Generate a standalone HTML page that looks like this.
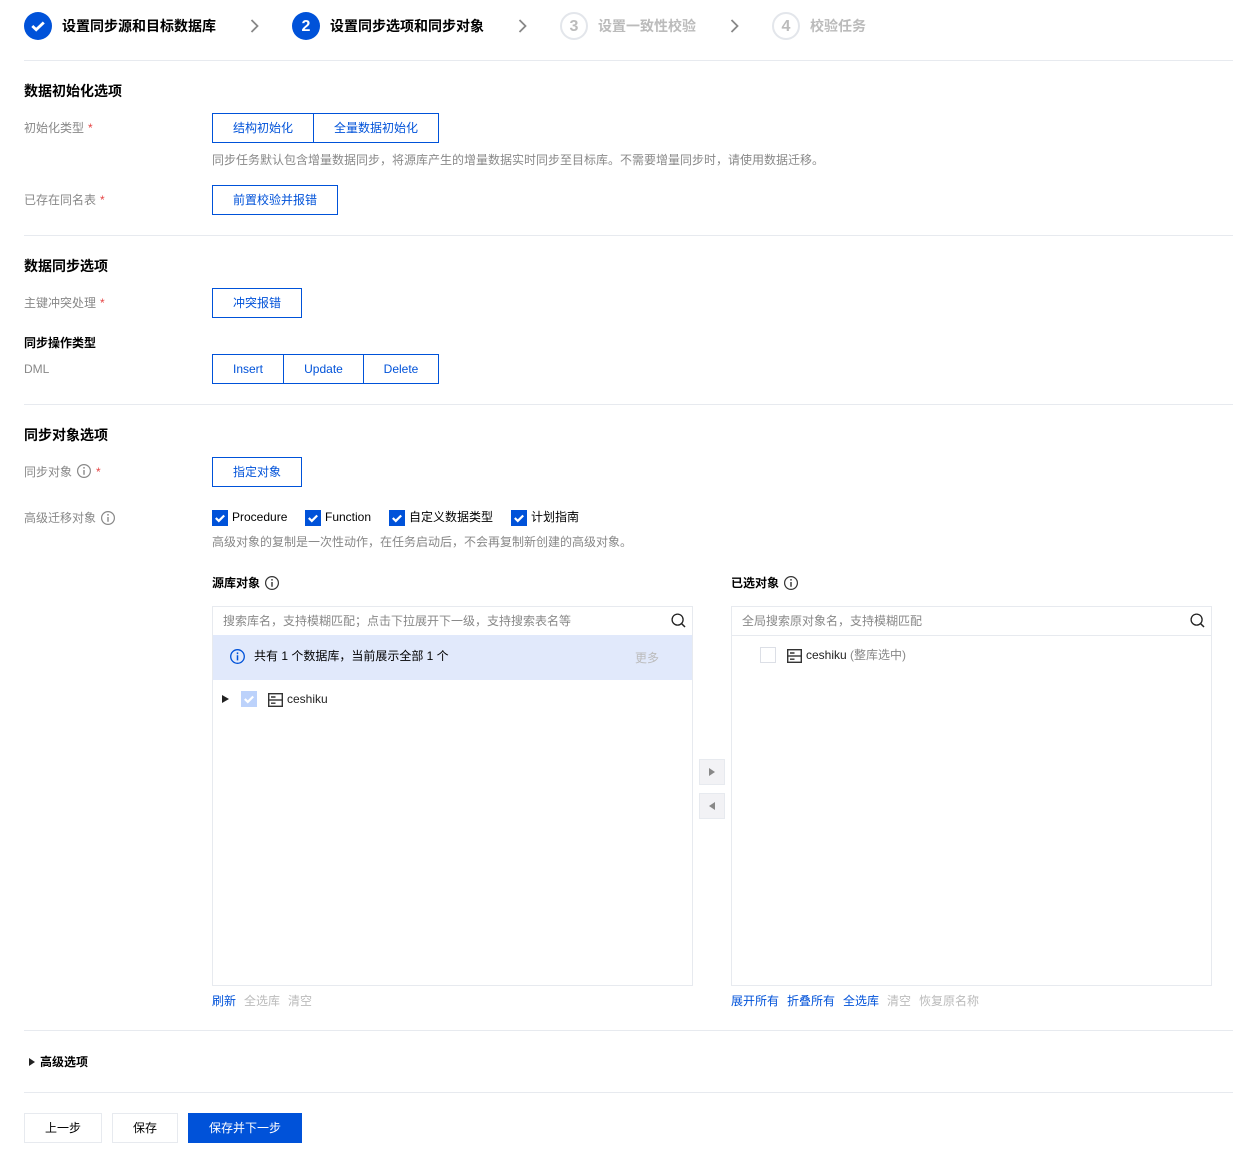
<!DOCTYPE html>
<html lang="zh">
<head>
<meta charset="utf-8">
<title>设置同步选项和同步对象</title>
<style>
html,body{margin:0;padding:0;background:#fff}
body{width:1233px;height:1155px;position:relative;overflow:hidden;font-family:"Liberation Sans","Noto Sans CJK SC",sans-serif;font-size:12px;color:#000}
.t{position:absolute;white-space:nowrap;line-height:20px;height:20px}
.g{color:#888}.d{color:#000}.l{color:#bbb}.b{color:#0052d9}
.h{font-weight:700;color:#000}
.s{font-size:14px;font-weight:700;color:#000}
.sg{font-size:14px;font-weight:700;color:#bbb}
.line{position:absolute;left:24px;width:1209px;height:1px;background:#e7eaef}
.btn{position:absolute;box-sizing:border-box;height:30px;border:1px solid #0052d9;color:#0052d9;background:#fff;text-align:center;line-height:28px;white-space:nowrap}
.r{color:#e54545;margin-left:4px;font-size:12px}
.circ{position:absolute;box-sizing:border-box;width:28px;height:28px;border-radius:50%;top:12px;text-align:center;font-size:16px;font-weight:700;line-height:26px}
.on{background:#0052d9;color:#fff;line-height:29px}
.off{border:2px solid #e3e6eb;color:#bbb;line-height:25px}
.cb{position:absolute;width:16px;height:16px;background:#0052d9}
.panel{position:absolute;box-sizing:border-box;top:606px;width:481px;height:380px;border:1px solid #e7eaef;background:#fff}
.sep{position:absolute;left:0;right:0;top:28px;height:1px;background:#e7eaef}
.mv{position:absolute;box-sizing:border-box;left:699px;width:26px;height:26px;background:#f2f2f5;border:1px solid #e7eaef}
svg{position:absolute;display:block;overflow:visible}
.fb{position:absolute;box-sizing:border-box;top:1113px;height:30px;border:1px solid #e7eaef;text-align:center;line-height:28px;color:#000;background:#fff}
</style>
</head>
<body>

<!-- Steps -->
<div class="circ on" style="left:24px"></div>
<svg style="left:24px;top:12px" width="28" height="28" viewBox="0 0 28 28"><path d="M8.3 14l3.9 3.7 7.6-7.2" fill="none" stroke="#fff" stroke-width="2.8"/></svg>
<div class="t s" style="left:62px;top:16px">设置同步源和目标数据库</div>
<svg style="left:250px;top:19px" width="10" height="14" viewBox="0 0 10 14"><path d="M1.5 1l6 6-6 6" fill="none" stroke="#888" stroke-width="1.8"/></svg>
<div class="circ on" style="left:292px">2</div>
<div class="t s" style="left:330px;top:16px">设置同步选项和同步对象</div>
<svg style="left:518px;top:19px" width="10" height="14" viewBox="0 0 10 14"><path d="M1.5 1l6 6-6 6" fill="none" stroke="#888" stroke-width="1.8"/></svg>
<div class="circ off" style="left:560px">3</div>
<div class="t sg" style="left:598px;top:16px">设置一致性校验</div>
<svg style="left:730px;top:19px" width="10" height="14" viewBox="0 0 10 14"><path d="M1.5 1l6 6-6 6" fill="none" stroke="#888" stroke-width="1.8"/></svg>
<div class="circ off" style="left:772px">4</div>
<div class="t sg" style="left:810px;top:16px">校验任务</div>
<div class="line" style="top:60px"></div>

<!-- Section 1 -->
<div class="t h" style="left:24px;top:81px;font-size:14px">数据初始化选项</div>
<div class="t g" style="left:24px;top:118px">初始化类型<span class="r">*</span></div>
<div class="btn" style="left:212px;top:113px;width:102px">结构初始化</div>
<div class="btn" style="left:313px;top:113px;width:126px">全量数据初始化</div>
<div class="t g" style="left:212px;top:150px">同步任务默认包含增量数据同步，将源库产生的增量数据实时同步至目标库。不需要增量同步时，请使用数据迁移。</div>
<div class="t g" style="left:24px;top:190px">已存在同名表<span class="r">*</span></div>
<div class="btn" style="left:212px;top:185px;width:126px">前置校验并报错</div>
<div class="line" style="top:235px"></div>

<!-- Section 2 -->
<div class="t h" style="left:24px;top:256px;font-size:14px">数据同步选项</div>
<div class="t g" style="left:24px;top:293px">主键冲突处理<span class="r">*</span></div>
<div class="btn" style="left:212px;top:288px;width:90px">冲突报错</div>
<div class="t h" style="left:24px;top:333px">同步操作类型</div>
<div class="t g" style="left:24px;top:359px">DML</div>
<div class="btn" style="left:212px;top:354px;width:72px">Insert</div>
<div class="btn" style="left:283px;top:354px;width:81px">Update</div>
<div class="btn" style="left:363px;top:354px;width:76px">Delete</div>
<div class="line" style="top:404px"></div>

<!-- Section 3 -->
<div class="t h" style="left:24px;top:425px;font-size:14px">同步对象选项</div>
<div class="t g" style="left:24px;top:462px">同步对象</div>
<svg style="left:77px;top:464px" width="14" height="14" viewBox="0 0 14 14"><circle cx="7" cy="7" r="6.4" fill="none" stroke="#888" stroke-width="1.2"/><path d="M7 3v1.6M7 6v4.8" stroke="#888" stroke-width="1.4"/></svg>
<div class="t" style="left:96px;top:462px;color:#e54545">*</div>
<div class="btn" style="left:212px;top:457px;width:90px">指定对象</div>
<div class="t g" style="left:24px;top:508px">高级迁移对象</div>
<svg style="left:101px;top:511px" width="14" height="14" viewBox="0 0 14 14"><circle cx="7" cy="7" r="6.4" fill="none" stroke="#888" stroke-width="1.2"/><path d="M7 3v1.6M7 6v4.8" stroke="#888" stroke-width="1.4"/></svg>

<div class="cb" style="left:212px;top:510px"></div>
<svg style="left:212px;top:510px" width="16" height="16" viewBox="0 0 16 16"><path d="M3.8 8l3 2.9 5.4-5.4" fill="none" stroke="#fff" stroke-width="2.2"/></svg>
<div class="t d" style="left:232px;top:507px">Procedure</div>
<div class="cb" style="left:305px;top:510px"></div>
<svg style="left:305px;top:510px" width="16" height="16" viewBox="0 0 16 16"><path d="M3.8 8l3 2.9 5.4-5.4" fill="none" stroke="#fff" stroke-width="2.2"/></svg>
<div class="t d" style="left:325px;top:507px">Function</div>
<div class="cb" style="left:389px;top:510px"></div>
<svg style="left:389px;top:510px" width="16" height="16" viewBox="0 0 16 16"><path d="M3.8 8l3 2.9 5.4-5.4" fill="none" stroke="#fff" stroke-width="2.2"/></svg>
<div class="t d" style="left:409px;top:507px">自定义数据类型</div>
<div class="cb" style="left:511px;top:510px"></div>
<svg style="left:511px;top:510px" width="16" height="16" viewBox="0 0 16 16"><path d="M3.8 8l3 2.9 5.4-5.4" fill="none" stroke="#fff" stroke-width="2.2"/></svg>
<div class="t d" style="left:531px;top:507px">计划指南</div>
<div class="t g" style="left:212px;top:532px">高级对象的复制是一次性动作，在任务启动后，不会再复制新创建的高级对象。</div>

<!-- Source panel -->
<div class="t h" style="left:212px;top:573px">源库对象</div>
<svg style="left:265px;top:576px" width="14" height="14" viewBox="0 0 14 14"><circle cx="7" cy="7" r="6.4" fill="none" stroke="#333" stroke-width="1.2"/><path d="M7 3v1.6M7 6v4.8" stroke="#333" stroke-width="1.4"/></svg>
<div class="panel" style="left:212px"></div>
<div class="t g" style="left:223px;top:611px">搜索库名，支持模糊匹配；点击下拉展开下一级，支持搜索表名等</div>
<svg style="left:671px;top:613px" width="15" height="15" viewBox="0 0 15 15"><circle cx="6.6" cy="6.6" r="5.5" fill="none" stroke="#222" stroke-width="1.3"/><path d="M10.6 10.6l3.4 3.4" stroke="#222" stroke-width="1.5"/></svg>
<div style="position:absolute;left:213px;top:635px;width:479px;height:45px;background:#e1e9fb"></div>
<svg style="left:230px;top:649px" width="15" height="15" viewBox="0 0 15 15"><circle cx="7.5" cy="7.5" r="6.8" fill="none" stroke="#0052d9" stroke-width="1.3"/><path d="M7.5 3.4v1.7M7.5 6.3v5.1" stroke="#0052d9" stroke-width="1.5"/></svg>
<div class="t d" style="left:254px;top:646px">共有 1 个数据库，当前展示全部 1 个</div>
<div class="t l" style="left:635px;top:648px">更多</div>
<svg style="left:222px;top:695px" width="7" height="8" viewBox="0 0 7 8"><path d="M0 0l7 4-7 4z" fill="#222"/></svg>
<div style="position:absolute;left:241px;top:691px;width:16px;height:16px;background:#bcd2fb"></div>
<svg style="left:241px;top:691px" width="16" height="16" viewBox="0 0 16 16"><path d="M3.8 8l3 2.9 5.4-5.4" fill="none" stroke="#fff" stroke-width="2.2"/></svg>
<svg style="left:268px;top:693px" width="15" height="14" viewBox="0 0 15 14"><rect x=".7" y=".7" width="13.6" height="12.6" fill="none" stroke="#333" stroke-width="1.4"/><path d="M.7 7h13.6" stroke="#333" stroke-width="1.4"/><path d="M3 4h4.5M3 10.2h4.5" stroke="#333" stroke-width="1.4"/></svg>
<div class="t" style="left:287px;top:689px;color:#222">ceshiku</div>

<div class="t b" style="left:212px;top:991px">刷新</div>
<div class="t l" style="left:244px;top:991px">全选库</div>
<div class="t l" style="left:288px;top:991px">清空</div>

<!-- Move buttons -->
<div class="mv" style="top:759px"></div>
<svg style="left:709px;top:768px" width="6" height="8" viewBox="0 0 6 8"><path d="M0 0l6 4-6 4z" fill="#888"/></svg>
<div class="mv" style="top:793px"></div>
<svg style="left:709px;top:802px" width="6" height="8" viewBox="0 0 6 8"><path d="M6 0L0 4l6 4z" fill="#888"/></svg>

<!-- Target panel -->
<div class="t h" style="left:731px;top:573px">已选对象</div>
<svg style="left:784px;top:576px" width="14" height="14" viewBox="0 0 14 14"><circle cx="7" cy="7" r="6.4" fill="none" stroke="#333" stroke-width="1.2"/><path d="M7 3v1.6M7 6v4.8" stroke="#333" stroke-width="1.4"/></svg>
<div class="panel" style="left:731px"><div class="sep"></div></div>
<div class="t g" style="left:742px;top:611px">全局搜索原对象名，支持模糊匹配</div>
<svg style="left:1190px;top:613px" width="15" height="15" viewBox="0 0 15 15"><circle cx="6.6" cy="6.6" r="5.5" fill="none" stroke="#222" stroke-width="1.3"/><path d="M10.6 10.6l3.4 3.4" stroke="#222" stroke-width="1.5"/></svg>
<div style="position:absolute;box-sizing:border-box;left:760px;top:647px;width:16px;height:16px;border:1px solid #dcdfe6;background:#fff"></div>
<svg style="left:787px;top:649px" width="15" height="14" viewBox="0 0 15 14"><rect x=".7" y=".7" width="13.6" height="12.6" fill="none" stroke="#333" stroke-width="1.4"/><path d="M.7 7h13.6" stroke="#333" stroke-width="1.4"/><path d="M3 4h4.5M3 10.2h4.5" stroke="#333" stroke-width="1.4"/></svg>
<div class="t" style="left:806px;top:645px;color:#222">ceshiku <span style="color:#888">(整库选中)</span></div>

<div class="t b" style="left:731px;top:991px">展开所有</div>
<div class="t b" style="left:787px;top:991px">折叠所有</div>
<div class="t b" style="left:843px;top:991px">全选库</div>
<div class="t l" style="left:887px;top:991px">清空</div>
<div class="t l" style="left:919px;top:991px">恢复原名称</div>

<div class="line" style="top:1030px"></div>
<svg style="left:29px;top:1058px" width="6" height="8" viewBox="0 0 6 8"><path d="M0 0l6 4-6 4z" fill="#222"/></svg>
<div class="t h" style="left:40px;top:1052px">高级选项</div>
<div class="line" style="top:1092px"></div>

<div class="fb" style="left:24px;width:78px">上一步</div>
<div class="fb" style="left:112px;width:66px">保存</div>
<div class="fb" style="left:188px;width:114px;background:#0052d9;border-color:#0052d9;color:#fff">保存并下一步</div>

</body>
</html>
